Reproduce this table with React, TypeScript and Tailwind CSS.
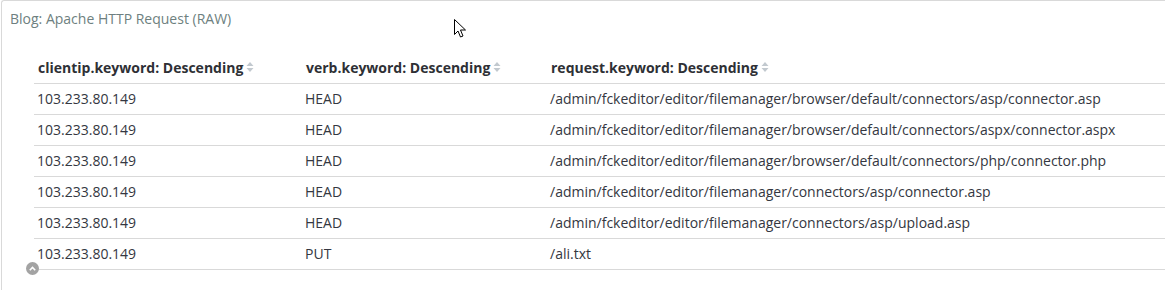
import React from "react";

const rows = [
  ["103.233.80.149", "HEAD", "/admin/fckeditor/editor/filemanager/browser/default/connectors/asp/connector.asp"],
  ["103.233.80.149", "HEAD", "/admin/fckeditor/editor/filemanager/browser/default/connectors/aspx/connector.aspx"],
  ["103.233.80.149", "HEAD", "/admin/fckeditor/editor/filemanager/browser/default/connectors/php/connector.php"],
  ["103.233.80.149", "HEAD", "/admin/fckeditor/editor/filemanager/connectors/asp/connector.asp"],
  ["103.233.80.149", "HEAD", "/admin/fckeditor/editor/filemanager/connectors/asp/upload.asp"],
  ["103.233.80.149", "PUT", "/ali.txt"],
];

const headers = [
  "clientip.keyword: Descending",
  "verb.keyword: Descending",
  "request.keyword: Descending",
];

function SortIcon() {
  return (
    <svg width="8" height="12" viewBox="0 0 8 12" className="ml-[3px] inline-block">
      <path d="M4 1 L7.5 5 L0.5 5 Z" fill="#c2c9cf" />
      <path d="M4 11 L7.5 7 L0.5 7 Z" fill="#c2c9cf" />
    </svg>
  );
}

export default function App() {
  return (
    <div className="relative h-[290px] w-[1165px] overflow-hidden bg-white pl-px font-['Open_Sans',sans-serif]">
      <div className="h-[300px] rounded-tl-[3px] border-l border-t border-[#d9d9d9] bg-white">
        <div className="pl-2 pt-[8px] text-[14px] leading-[19px] text-[#6e7f80]">
          Blog: Apache HTTP Request (RAW)
        </div>

        <table className="ml-8 mt-[24px] w-[1132px] table-fixed border-collapse text-[14px] text-[#343741]">
          <colgroup>
            <col className="w-[268px]" />
            <col className="w-[245px]" />
            <col />
          </colgroup>
          <thead>
            <tr className="h-[31px] border-b border-[#d9d9d9]">
              {headers.map((h) => (
                <th key={h} className="px-[4px] text-left font-bold text-[#2e3035]">
                  <span className="inline-flex items-center">
                    {h}
                    <SortIcon />
                  </span>
                </th>
              ))}
            </tr>
          </thead>
          <tbody>
            {rows.map((r, i) => (
              <tr key={i} className="h-[31px] border-b border-[#d9d9d9]">
                {r.map((c, j) => (
                  <td key={j} className="whitespace-nowrap px-[3px] font-normal">
                    {c}
                  </td>
                ))}
              </tr>
            ))}
          </tbody>
        </table>
      </div>

      {/* collapse toggle */}
      <div className="absolute left-[26px] top-[262px] flex h-[13px] w-[13px] items-center justify-center rounded-full bg-[#a3a3a3]">
        <svg width="7" height="5" viewBox="0 0 7 5">
          <path d="M0.8 4.2 L3.5 1.5 L6.2 4.2" fill="none" stroke="#fff" strokeWidth="1.6" />
        </svg>
      </div>

      {/* mouse cursor */}
      <svg className="absolute left-[454px] top-[19px]" width="13" height="20" viewBox="0 0 13 20">
        <path
          d="M0.5 0.5 L0.5 15.5 L4 12 L6.5 18 L9 17 L6.5 11 L11.5 11 Z"
          fill="#fff"
          stroke="#000"
          strokeWidth="1"
          strokeLinejoin="miter"
        />
      </svg>
    </div>
  );
}
